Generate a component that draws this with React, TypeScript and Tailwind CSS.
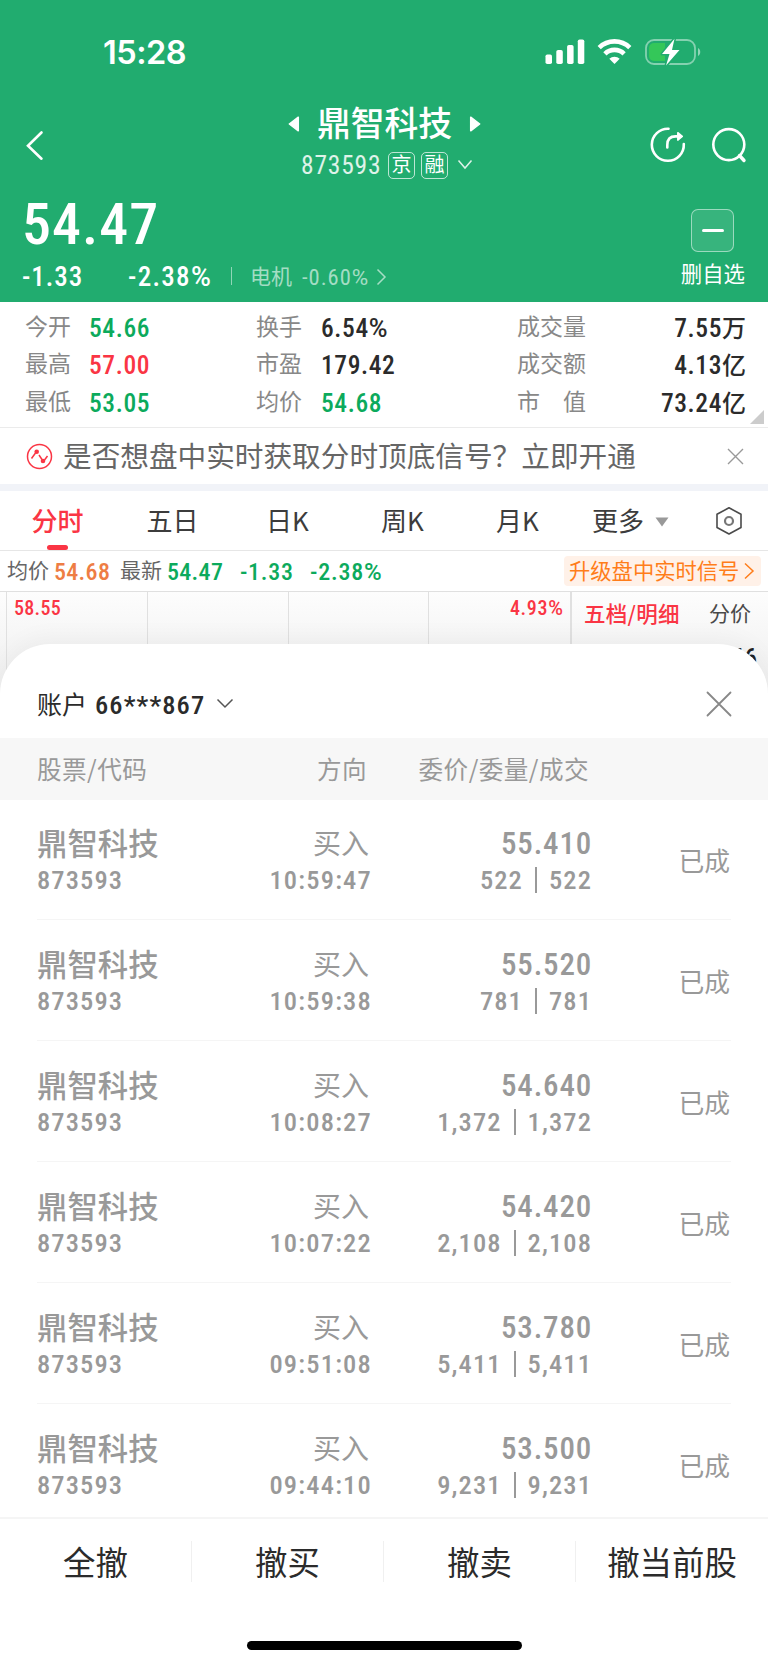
import React from 'react';

const NUM = "font-['Roboto','Noto_Sans_CJK_SC',sans-serif] [font-stretch:85%] whitespace-nowrap leading-none";

type Tone = 'up' | 'down' | 'plain';

const toneClass: Record<Tone, string> = {
  up: 'text-[#fa3544]',
  down: 'text-[#0caa5c]',
  plain: 'text-[#2b2b2b]',
};

const quotes: Array<Array<{ label: string; value: string; unit?: string; tone: Tone }>> = [
  [
    { label: '今开', value: '54.66', tone: 'down' },
    { label: '换手', value: '6.54%', tone: 'plain' },
    { label: '成交量', value: '7.55', unit: '万', tone: 'plain' },
  ],
  [
    { label: '最高', value: '57.00', tone: 'up' },
    { label: '市盈', value: '179.42', tone: 'plain' },
    { label: '成交额', value: '4.13', unit: '亿', tone: 'plain' },
  ],
  [
    { label: '最低', value: '53.05', tone: 'down' },
    { label: '均价', value: '54.68', tone: 'down' },
    { label: '市　值', value: '73.24', unit: '亿', tone: 'plain' },
  ],
];

const orders = [
  { time: '10:59:47', price: '55.410', qty: '522' },
  { time: '10:59:38', price: '55.520', qty: '781' },
  { time: '10:08:27', price: '54.640', qty: '1,372' },
  { time: '10:07:22', price: '54.420', qty: '2,108' },
  { time: '09:51:08', price: '53.780', qty: '5,411' },
  { time: '09:44:10', price: '53.500', qty: '9,231' },
];

const tabs = ['分时', '五日', '日K', '周K', '月K'];
const actions = ['全撤', '撤买', '撤卖', '撤当前股'];

// Condensed digits, but the percent sign keeps its full width
function Digits({ value }: { value: string }) {
  if (!value.endsWith('%')) return <>{value}</>;
  return (
    <>
      {value.slice(0, -1)}
      <span className="tracking-normal [font-stretch:100%]">%</span>
    </>
  );
}

function StatusBar() {
  return (
    <div className="flex h-[104px] items-center pl-[103px] pr-[67px]">
      <span className="mt-[3px] font-['Inter',sans-serif] text-[32.5px] font-semibold leading-none tracking-[-0.5px]">15:28</span>
      <svg className="ml-auto" width="40" height="26" viewBox="0 0 40 26" fill="#fff">
        <rect x="0.5" y="15.5" width="6.5" height="9.5" rx="1.8" />
        <rect x="11.3" y="11" width="6.5" height="14" rx="1.8" />
        <rect x="22.1" y="6" width="6.5" height="19" rx="1.8" />
        <rect x="32.8" y="0.5" width="6.5" height="24.5" rx="1.8" />
      </svg>
      <svg className="ml-[12px]" width="35" height="26" viewBox="0 0 35 26" fill="none" stroke="#fff" strokeWidth="4.6">
        <path d="M2.2 8.6a22 22 0 0 1 30.6 0" />
        <path d="M7.9 14.8a13.6 13.6 0 0 1 19.2 0" />
        <path d="M17.5 25l-5.2-5.2a7.4 7.4 0 0 1 10.4 0z" fill="#fff" stroke="none" />
      </svg>
      <svg className="ml-[13px]" width="56" height="28" viewBox="0 0 56 28">
        <rect x="1" y="2" width="49" height="24" rx="8" fill="none" stroke="#fff" strokeOpacity="0.45" strokeWidth="1.8" />
        <path d="M9 5h11v18H9a5 5 0 0 1-5-5v-8a5 5 0 0 1 5-5z" fill="#34c759" />
        <path d="M53 10c3 1.5 3 6.5 0 8z" fill="#fff" fillOpacity="0.5" />
        <path
          d="M29.5 0.8L17 16h7.5l-3.5 11.5L34.5 12h-7.5z"
          fill="#fff"
          stroke="#21ac6f"
          strokeWidth="3"
          paintOrder="stroke"
          strokeLinejoin="round"
        />
      </svg>
    </div>
  );
}

function Header() {
  return (
    <header className="h-[302px] bg-[#21ac6f] text-white">
      <StatusBar />
      <div className="flex h-[88px] justify-between pl-[26px] pr-[21px]">
        <svg className="mt-[26px]" width="18" height="32" viewBox="0 0 18 32" fill="none" stroke="#fff" strokeWidth="2.6" strokeLinecap="round">
          <path d="M15.5 2.5L2 15.7l13.5 13" />
        </svg>
        <div className="ml-[76px] flex flex-col items-center">
          <div className="flex h-[39px] items-center">
            <svg width="12" height="16" viewBox="0 0 12 16" fill="#fff" stroke="#fff" strokeWidth="1.5" strokeLinejoin="round">
              <path d="M10.3 1.2v13.6L1.3 8z" />
            </svg>
            <h1 className="mx-[17px] mt-[-3px] text-[33.8px] font-medium leading-none">鼎智科技</h1>
            <svg width="12" height="16" viewBox="0 0 12 16" fill="#fff" stroke="#fff" strokeWidth="1.5" strokeLinejoin="round">
              <path d="M1.7 1.2v13.6l9-6.8z" />
            </svg>
          </div>
          <div className="mt-[4px] flex h-[36px] items-center pl-[5px]">
            <span className={`${NUM} mt-[2px] w-[79px] text-[25.5px] tracking-[0.8px] text-white/85`}>873593</span>
            <span className="ml-[8px] flex h-[27px] w-[27px] items-center justify-center rounded-[5px] border border-white/70 pb-[2px] text-[20px] leading-none">京</span>
            <span className="ml-[6px] flex h-[27px] w-[27px] items-center justify-center rounded-[5px] border border-white/70 pb-[2px] text-[20px] leading-none">融</span>
            <svg className="ml-[9px]" width="16" height="12" viewBox="0 0 16 12" fill="none" stroke="#fff" strokeOpacity="0.85" strokeWidth="1.5">
              <path d="M1.5 1.5L8 9l6.5-7.5" />
            </svg>
          </div>
        </div>
        <div className="mt-[22px] flex gap-[24px]">
          <svg width="38" height="38" viewBox="0 0 38 38" fill="none" stroke="#fff" strokeWidth="2.6" strokeLinecap="round">
            <path d="M19.5 2.8A16 16 0 1 0 34.8 18.1" />
            <path d="M18.3 21.5v-2.5c0-5.8 3-8.6 8.2-8.6h5" />
            <path d="M28.8 6.7l4.5 3.7-4.5 3.7z" fill="#fff" strokeWidth="1.5" strokeLinejoin="round" />
          </svg>
          <svg width="36" height="38" viewBox="0 0 36 38" fill="none" stroke="#fff" strokeWidth="2.6" strokeLinecap="round">
            <circle cx="17.8" cy="18.6" r="15.5" />
            <path d="M28.5 29.5l4.5 5" strokeWidth="3.4" />
          </svg>
        </div>
      </div>
      <div className="flex justify-between pl-[22px] pr-[23px]">
        <div>
          <div className={`${NUM} mt-[3px] text-[58px] font-medium tracking-[1px]`}>54.47</div>
          <div className="mt-[8px] flex h-[32px] items-center">
            <span className={`${NUM} w-[106px] text-[27px] font-medium tracking-[1px]`}>-1.33</span>
            <span className={`${NUM} w-[103px] text-[27px] font-medium tracking-[1.3px]`}>
              <Digits value="-2.38%" />
            </span>
            <span className="mb-[2px] h-[18px] w-px bg-white/50" />
            <span className="ml-[18px] mt-[-4px] text-[21px] leading-none text-white/60">电机</span>
            <span className={`${NUM} ml-[10px] w-[67px] text-[22.5px] tracking-[1px] text-white/60`}>
              <Digits value="-0.60%" />
            </span>
            <svg className="ml-[7px]" width="11" height="18" viewBox="0 0 11 18" fill="none" stroke="#fff" strokeOpacity="0.6" strokeWidth="1.5">
              <path d="M1.5 1.5L9 9l-7.5 7.5" />
            </svg>
          </div>
        </div>
        <div className="mt-[17px] flex flex-col items-center">
          <div className="flex h-[43px] w-[43px] items-center justify-center rounded-[7px] border border-white/50 bg-white/10">
            <span className="h-[3px] w-[22px] rounded-full bg-white" />
          </div>
          <span className="mt-[10px] text-[21.4px] leading-none">删自选</span>
        </div>
      </div>
    </header>
  );
}

function Quotes() {
  return (
    <section className="relative h-[126px] border-b border-[#ebebeb] bg-white pt-[6px]">
      {quotes.map((row, i) => (
        <div key={i} className="flex h-[37.5px] items-center pl-[25px] pr-[22px]">
          {row.map((q, j) => (
            <div key={q.label} className={j === 0 ? 'flex w-[231px] items-center' : j === 1 ? 'flex w-[261px] items-center' : 'flex flex-1 items-center justify-between'}>
              <span className={`${j === 0 ? 'w-[64px]' : j === 1 ? 'w-[65px]' : ''} mt-[-3px] text-[23px] leading-none text-[#888]`}>{q.label}</span>
              <span className={`flex items-center ${toneClass[q.tone]}`}>
                <span className={`${NUM} mt-[3px] text-[25.5px] font-medium tracking-[0.6px]`}>
                  <Digits value={q.value} />
                </span>
                {q.unit && <span className="text-[24px] font-medium leading-none">{q.unit}</span>}
              </span>
            </div>
          ))}
        </div>
      ))}
      <svg className="absolute bottom-[3px] right-[4px]" width="14" height="14" viewBox="0 0 14 14" fill="#ccc">
        <path d="M14 0v14H0z" />
      </svg>
    </section>
  );
}

function Promo() {
  return (
    <section className="flex h-[56px] items-center bg-white pl-[26px] pr-[24px] text-[#666]">
      <svg width="27" height="27" viewBox="0 0 27 27" fill="none" stroke="#fa3544" strokeWidth="1.5">
        <circle cx="13.5" cy="13.5" r="12" />
        <path d="M5.5 15.5l4-5.5M13 12l3 4.5M18.5 17l3-4" />
        <circle cx="10.7" cy="8.8" r="2.3" fill="#fa3544" stroke="none" />
        <circle cx="17" cy="18" r="2.3" fill="#fa3544" stroke="none" />
      </svg>
      <span className="ml-[10px] mt-[-2px] whitespace-nowrap text-[28.65px] leading-none">是否想盘中实时获取分时顶底信号？立即开通</span>
      <svg className="ml-auto" width="17" height="17" viewBox="0 0 17 17" fill="none" stroke="#999" strokeWidth="1.4">
        <path d="M1 1l15 15M16 1L1 16" />
      </svg>
    </section>
  );
}

function Tabs() {
  return (
    <nav className="flex h-[60px] border-b border-[#e6e6e6] bg-white text-[26px] leading-none text-[#3c3c3c]">
      {tabs.map((t, i) => (
        <div key={t} className={`flex w-[115px] flex-col items-center pt-[16px] ${i === 0 ? 'font-medium text-[#fa3544]' : ''}`}>
          <span>{t}</span>
          {i === 0 && <span className="mt-[12px] h-[5px] w-[21px] rounded-full bg-[#fa3544]" />}
        </div>
      ))}
      <div className="flex flex-1 items-start pl-[17px] pt-[16px]">
        <span>更多</span>
        <svg className="ml-[11px] mt-[10px]" width="14" height="10" viewBox="0 0 14 10" fill="#999">
          <path d="M0.5 0.5h13L7 9.5z" />
        </svg>
        <svg className="ml-[46px] mt-[-1px]" width="28" height="30" viewBox="0 0 28 30" fill="none" stroke="#4a4a4a" strokeWidth="1.6" strokeLinejoin="round">
          <path d="M14 1.8L26 8.3v13.2L14 28 2 21.5V8.3z" />
          <circle cx="14" cy="15" r="4" stroke="#777" strokeWidth="2.2" />
        </svg>
      </div>
    </nav>
  );
}

function Chart() {
  return (
    <section className="h-[154px]">
      <div className="flex h-[40px] items-center pl-[7px] pr-[7px]">
        <span className="mt-[-3px] text-[21px] leading-none text-[#666]">均价</span>
        <span className={`${NUM} ml-[5px] mt-[2px] w-[66px] text-[24px] font-medium tracking-[0.3px] text-[#ee7d44]`}>54.68</span>
        <span className="mt-[-3px] text-[21px] leading-none text-[#666]">最新</span>
        <span className={`${NUM} ml-[5px] mt-[2px] w-[73px] text-[24px] font-medium tracking-[0.3px] text-[#0caa5c]`}>54.47</span>
        <span className={`${NUM} mt-[2px] w-[70px] text-[24px] font-medium tracking-[0.7px] text-[#0caa5c]`}>-1.33</span>
        <span className={`${NUM} mt-[2px] text-[24px] font-medium tracking-[0.8px] text-[#0caa5c]`}>
          <Digits value="-2.38%" />
        </span>
        <div className="ml-auto flex h-[30px] w-[197px] items-center rounded-[4px] bg-[#fff1e8] pl-[5px] text-[#ff7d1a]">
          <span className="mt-[-2px] text-[21.3px] leading-none">升级盘中实时信号</span>
          <svg className="ml-[5px]" width="11" height="18" viewBox="0 0 11 18" fill="none" stroke="currentColor" strokeWidth="1.5">
            <path d="M1 1.5L9 9l-8 7.5" />
          </svg>
        </div>
      </div>
      <div className="flex h-[114px] border-t border-[#e0e0e0] bg-gradient-to-b from-[#fdfdfd] to-[#ececec]">
        <div className="ml-[6px] grid w-[564px] grid-cols-4 border-l border-[#e0e0e0]">
          <div className="flex items-start border-r border-[#e0e0e0] pl-[7px] pt-[6px]">
            <span className={`${NUM} text-[20px] font-medium tracking-[0.3px] text-[#fa3544]`}>58.55</span>
          </div>
          <div className="border-r border-[#e0e0e0]" />
          <div className="border-r border-[#e0e0e0]" />
          <div className="flex items-start justify-end pr-[7px] pt-[6px]">
            <span className={`${NUM} text-[20px] font-medium tracking-[0.7px] text-[#fa3544]`}>
              <Digits value="4.93%" />
            </span>
          </div>
        </div>
        <div className="flex-1 border-l-2 border-[#e0e0e0] pl-[12px] pr-[11px]">
          <div className="flex items-center justify-between pr-[6px] pt-[10px] text-[21.5px] leading-none">
            <span className="font-medium tracking-[0.3px] text-[#fa3544]">五档/明细</span>
            <span className="text-[21px] text-[#4a4a4a]">分价</span>
          </div>
          <div className={`${NUM} mt-[22px] text-right text-[25px] font-medium text-[#222]`}>54.66</div>
        </div>
      </div>
    </section>
  );
}

function OrderRow({ time, price, qty }: { time: string; price: string; qty: string }) {
  return (
    <div className="mx-[37px] flex h-[121px] border-b border-[#f5f5f5] text-[#999]">
      <div className="w-[160px] pt-[28px]">
        <div className="text-[30.4px] font-medium leading-none">鼎智科技</div>
        <div className={`${NUM} mt-[10px] text-[26.5px] font-medium tracking-[1.1px]`}>873593</div>
      </div>
      <div className="w-[175px] pt-[29px] text-right">
        <div className="pr-[3px] text-[28px] leading-none">买入</div>
        <div className={`${NUM} mt-[11px] text-[26.5px] font-medium tracking-[1.2px]`}>{time}</div>
      </div>
      <div className="w-[220px] pt-[29px] text-right">
        <div className={`${NUM} text-[31px] font-medium tracking-[0.8px]`}>{price}</div>
        <div className="mt-[8px] flex items-center justify-end">
          <span className={`${NUM} text-[26.5px] font-medium tracking-[1.1px]`}>{qty}</span>
          <span className="mx-[12px] h-[26px] w-[2px] bg-[#999]" />
          <span className={`${NUM} text-[26.5px] font-medium tracking-[1.1px]`}>{qty}</span>
        </div>
      </div>
      <div className="flex-1 pr-px pt-[48px] text-right text-[25.8px] leading-none">已成</div>
    </div>
  );
}

function OrderSheet() {
  return (
    <section className="relative -mt-[61px] flex flex-1 flex-col rounded-t-[50px] bg-white shadow-[0_-6px_24px_rgba(0,0,0,0.04)]">
      <div className="flex h-[94px] items-center pl-[37px] pr-[36px] pt-[27px] text-[#2b2b2b]">
        <span className="mt-[-3px] text-[25px] leading-none">账户</span>
        <span className={`${NUM} ml-[8px] mt-[2px] w-[108px] text-[26.5px] font-medium tracking-[1.1px]`}>66***867</span>
        <svg className="ml-[13px] mt-[-3px]" width="18" height="11" viewBox="0 0 18 11" fill="none" stroke="#555" strokeWidth="1.5">
          <path d="M1.5 1.5L9 9l7.5-7.5" />
        </svg>
        <svg className="ml-auto mt-[-2px]" width="26" height="26" viewBox="0 0 26 26" fill="none" stroke="#888" strokeWidth="1.8" strokeLinecap="round">
          <path d="M1.5 1.5l23 23M24.5 1.5l-23 23" />
        </svg>
      </div>
      <div className="flex h-[62px] items-center bg-[#f7f7f7] px-[37px] pb-[2px] text-[24.6px] leading-none tracking-[0.45px] text-[#999]">
        <span className="w-[160px]">股票/代码</span>
        <span className="w-[170px] text-right">方向</span>
        <span className="w-[222px] text-right">委价/委量/成交</span>
      </div>
      <div className="-mt-px h-[718px] overflow-hidden">
        {orders.map((o) => (
          <OrderRow key={o.time} {...o} />
        ))}
      </div>
      <div className="grid h-[87px] grid-cols-4 border-t-2 border-[#f5f5f5]">
        {actions.map((a, i) => (
          <div key={a} className="flex items-center">
            <span className="flex-1 text-center text-[32.4px] leading-none text-[#2b2b2b]">{a}</span>
            {i < 3 && <span className="h-[41px] w-px bg-[#f0f0f0]" />}
          </div>
        ))}
      </div>
      <div className="mx-auto mt-[37px] h-[9px] w-[275px] rounded-full bg-black" />
    </section>
  );
}

export default function App() {
  return (
    <div className="flex h-[1665px] w-[768px] flex-col overflow-hidden bg-white font-['Noto_Sans_CJK_SC',sans-serif]">
      <Header />
      <Quotes />
      <Promo />
      <div className="h-[7px] shrink-0 bg-[#f1f3f8]" />
      <Tabs />
      <Chart />
      <OrderSheet />
    </div>
  );
}
